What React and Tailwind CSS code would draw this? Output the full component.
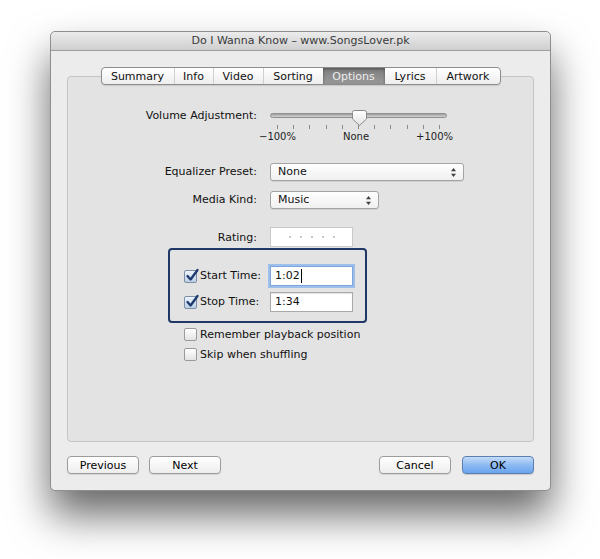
import React from "react";

const tabs = [
    { name: "Summary", w: "w-[72px]" },
    { name: "Info", w: "w-[39px]" },
    { name: "Video", w: "w-[50px]" },
    { name: "Sorting", w: "w-[60px]" },
    { name: "Options", w: "w-[62px]", active: true },
    { name: "Lyrics", w: "w-[51px]" },
    { name: "Artwork", w: "w-[64px]" },
];

function CheckBox({ checked }) {
    return (
        <span
            className={
                checked
                    ? "relative w-[13px] h-[13px] shrink-0 rounded-[2px] border border-[#7d8ea6] bg-gradient-to-b from-[#eef4fb] to-[#bccfe6]"
                    : "relative w-[13px] h-[13px] shrink-0 rounded-[2px] border border-[#9a9a9a] bg-gradient-to-b from-white to-[#e4e4e4]"
            }
        >
            {checked && (
                <svg className="absolute -top-[3px] left-[0px]" width="15" height="15" viewBox="0 0 15 15">
                    <path d="M2.5 8 L5.6 11.5 L12.5 2" fill="none" stroke="#1c3a6e" strokeWidth="2.3" strokeLinecap="round" strokeLinejoin="round" />
                </svg>
            )}
        </span>
    );
}

function Popup({ value, width }) {
    return (
        <div className={width + " h-[18px] flex items-center justify-between pl-[7px] pr-[6px] rounded-[3px] border border-[#a3a3a3] bg-gradient-to-b from-white to-[#f0f0f0] shadow-[0_1px_0_rgba(0,0,0,0.08)]"}>
            <span>{value}</span>
            <svg width="7" height="11" viewBox="0 0 7 11">
                <path d="M3.5 1 L6 4.3 L1 4.3 Z" fill="#404040" />
                <path d="M3.5 10 L6 6.7 L1 6.7 Z" fill="#404040" />
            </svg>
        </div>
    );
}

function Button({ children, primary }) {
    return (
        <button
            className={
                primary
                    ? "w-[72px] h-[18px] rounded-[4px] border border-[#5c7fb2] bg-gradient-to-b from-[#c4dcf8] via-[#8dbaf2] to-[#69a4ee] text-[11px] leading-none text-black shadow-[0_1px_1px_rgba(0,0,0,0.15)]"
                    : "w-[72px] h-[18px] rounded-[4px] border border-[#9c9c9c] bg-gradient-to-b from-white to-[#ededed] text-[11px] leading-none text-black shadow-[0_1px_1px_rgba(0,0,0,0.1)]"
            }
        >
            {children}
        </button>
    );
}

function VolumeSlider() {
    return (
        <div className="relative w-[177px] pt-[5px]">
            <div className="h-[5px] rounded-full border border-[#8f8f8f] bg-gradient-to-b from-[#9d9d9d] to-[#d4d4d4]" />
            {/* thumb */}
            <svg className="absolute left-[82px] top-[2px]" width="15" height="16" viewBox="0 0 15 16">
                <defs>
                    <linearGradient id="thumbG" x1="0" y1="0" x2="0" y2="1">
                        <stop offset="0" stopColor="#ffffff" />
                        <stop offset="1" stopColor="#e2e2e2" />
                    </linearGradient>
                </defs>
                <path d="M2.5 0.5 H12.5 Q14.5 0.5 14.5 2.5 V9 L7.5 15.5 L0.5 9 V2.5 Q0.5 0.5 2.5 0.5 Z" fill="url(#thumbG)" stroke="#8a8a8a" strokeWidth="1" />
            </svg>
            <div className="flex justify-between px-[7px] mt-[7px] h-[4px]">
                {Array.from({ length: 11 }).map((_, i) => (
                    <span key={i} className="w-px h-[4px] bg-[#8a8a8a]" />
                ))}
            </div>
            <div className="flex justify-between w-[194px] -ml-[11px] mt-[2px] text-[10px] leading-[12px] text-[#222]">
                <span>−100%</span>
                <span>None</span>
                <span>+100%</span>
            </div>
        </div>
    );
}

function Label({ children }) {
    return <div className="w-[202px] pr-[13px] text-right shrink-0">{children}</div>;
}

export default function App() {
    return (
        <div
            className="w-[600px] h-[559px] bg-white pt-[31px] pl-[50px] overflow-hidden text-[11px] text-[#111]"
            style={{ fontFamily: '"DejaVu Sans", "Liberation Sans", sans-serif' }}
        >
            <div className="w-[501px] h-[460px] bg-[#ececec] rounded-[5px] border border-[#8e8e8e] shadow-[0_24px_42px_rgba(0,0,0,0.6)] flex flex-col">
                {/* title bar */}
                <div className="h-[19px] rounded-t-[5px] bg-gradient-to-b from-[#ececec] to-[#cfcfcf] border-b border-[#9e9e9e] flex items-center justify-center text-[#3a3a3a] text-[11px]">
                    Do I Wanna Know – www.SongsLover.pk
                </div>

                <div className="px-[16px] pt-[16px] flex flex-col">
                    {/* tabs */}
                    <div className="relative z-10 self-center flex h-[18px] rounded-[4px] border border-[#8d8d8d] bg-gradient-to-b from-white to-[#eeeeee] overflow-hidden shadow-[0_1px_1px_rgba(0,0,0,0.12)]">
                        {tabs.map((t, i) => (
                            <div
                                key={t.name}
                                className={
                                    (t.active
                                        ? "bg-gradient-to-b from-[#7d7d7d] to-[#9a9a9a] text-[#ececec] shadow-[inset_0_1px_3px_rgba(0,0,0,0.4)] "
                                        : "text-[#111] ") +
                                    (i > 0 && !t.active && !tabs[i - 1].active ? "border-l border-[#cfcfcf] " : "") +
                                    t.w +
                                    " flex items-center justify-center leading-none"
                                }
                            >
                                {t.name}
                            </div>
                        ))}
                    </div>

                    {/* tab box */}
                    <div className="-mt-[9px] h-[366px] rounded-[4px] border border-[#c4c4c4] bg-[#e3e3e3] pt-[31px] flex flex-col">
                        <div className="flex items-start">
                            <Label><span className="leading-[15px]">Volume Adjustment:</span></Label>
                            <VolumeSlider />
                        </div>

                        <div className="flex items-center mt-[20px]">
                            <Label>Equalizer Preset:</Label>
                            <Popup value="None" width="w-[194px]" />
                        </div>

                        <div className="flex items-center mt-[10px]">
                            <Label>Media Kind:</Label>
                            <Popup value="Music" width="w-[109px]" />
                        </div>

                        <div className="flex items-center mt-[18px]">
                            <Label><span className="relative top-[1px]">Rating:</span></Label>
                            <div className="w-[83px] h-[20px] bg-white border border-[#c9c9c9] flex items-center justify-end gap-[9px] pr-[17px]">
                                {Array.from({ length: 5 }).map((_, i) => (
                                    <span key={i} className="w-[2px] h-[2px] rounded-full bg-[#b5b5b5]" />
                                ))}
                            </div>
                        </div>

                        <div className="ml-[100px] mt-[1px] w-[199px] h-[75px] rounded-[4px] border-[2.5px] border-[#1f3866] pl-[14px] pt-[16px] flex flex-col gap-[6px]">
                            <div className="flex items-center">
                                <CheckBox checked />
                                <span className="ml-[3px] w-[70px]">Start Time:</span>
                                <div className="w-[83px] h-[20px] bg-white border border-[#7fa6dc] shadow-[0_0_0_2px_#9cbfeb] flex items-center pl-[4px]">
                                    1:02<span className="ml-[1px] w-px h-[14px] bg-black" />
                                </div>
                            </div>
                            <div className="flex items-center">
                                <CheckBox checked />
                                <span className="ml-[3px] w-[70px]">Stop Time:</span>
                                <div className="w-[83px] h-[20px] bg-white border border-[#a9a9a9] shadow-[inset_0_1px_1px_rgba(0,0,0,0.12)] flex items-center pl-[4px]">
                                    1:34
                                </div>
                            </div>
                        </div>

                        <div className="ml-[116px] mt-[5px] flex flex-col gap-[7px] leading-[13px]">
                            <div className="flex items-center gap-[3px]">
                                <CheckBox />
                                <span>Remember playback position</span>
                            </div>
                            <div className="flex items-center gap-[3px]">
                                <CheckBox />
                                <span>Skip when shuffling</span>
                            </div>
                        </div>
                    </div>

                    {/* buttons */}
                    <div className="flex items-center mt-[14px]">
                        <Button>Previous</Button>
                        <div className="ml-[10px]"><Button>Next</Button></div>
                        <div className="ml-auto"><Button>Cancel</Button></div>
                        <div className="ml-[11px]"><Button primary>OK</Button></div>
                    </div>
                </div>
            </div>
        </div>
    );
}
